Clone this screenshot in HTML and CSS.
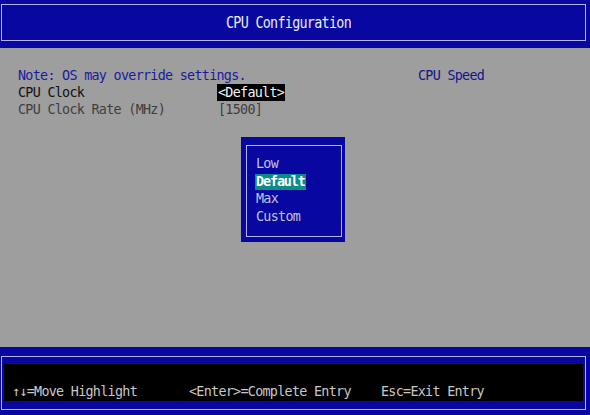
FILE: index.html
```html
<!DOCTYPE html>
<html lang="en">
<head>
    <meta charset="UTF-8">
    <meta name="viewport" content="width=device-width, initial-scale=1.0">
    <title>CPU Configuration</title>
    <link rel="stylesheet" href="styles.css">
</head>
<body>
    <div class="screen">
        <header class="title-bar">
            <div class="frame title-frame">
                <span class="title">CPU Configuration</span>
            </div>
        </header>

        <main class="setup">
            <div class="settings">
                <div class="note">Note: OS may override settings.</div>
                <div class="row">
                    <span class="label">CPU Clock</span>
                    <span class="value selected">&lt;Default&gt;</span>
                </div>
                <div class="row dim">
                    <span class="label">CPU Clock Rate (MHz)</span>
                    <span class="value">[1500]</span>
                </div>
            </div>
            <div class="help">CPU Speed</div>

            <!-- option list popup -->
            <div class="popup">
                <ul class="frame options">
                    <li>Low</li>
                    <li><span class="current">Default</span></li>
                    <li>Max</li>
                    <li>Custom</li>
                </ul>
            </div>
        </main>

        <footer class="key-bar">
            <div class="frame key-frame">
                <div class="keys">
                    <span>&uarr;&darr;=Move Highlight</span>
                    <span>&lt;Enter&gt;=Complete Entry</span>
                    <span>Esc=Exit Entry</span>
                </div>
            </div>
        </footer>
    </div>
</body>
</html>
```

FILE: styles.css
```css
body {
    margin: 0;
    font-family: 'DejaVu Sans Mono', 'Liberation Mono', monospace;
    font-size: 13.4px;
    line-height: 17px;
    letter-spacing: -0.71px;
    background-color: #9e9e9e;
    color: #111;
}

.screen {
    display: flex;
    flex-direction: column;
    width: 590px;
    height: 415px;
    overflow: hidden;
}

.frame {
    border: 1px solid #b4b4ee;
}

/* top title */
.title-bar {
    background: #0808a0;
    height: 48px;
    box-sizing: border-box;
    padding: 4px 4px 7px 1px;
}

.title-frame {
    height: 100%;
    box-sizing: border-box;
    display: flex;
    align-items: center;
    justify-content: center;
    padding-right: 10px;
}

.title {
    display: inline-block;
    color: #ececf4;
    transform: scaleY(1.2);
}

/* middle area */
.setup {
    flex: 1;
    position: relative;
    display: flex;
    padding: 19px 0 0 18px;
}

.settings {
    width: 400px;
}

.note {
    color: #1a1aa0;
}

.row {
    display: flex;
}

.label {
    width: 200px;
}

.value {
    padding: 0 1px;
    margin-left: -1px;
}

.selected {
    background: #000;
    color: #f4f4f4;
}

.dim {
    color: #3e3e3e;
}

.help {
    color: #14148c;
}

.popup {
    position: absolute;
    left: 241px;
    top: 89px;
    width: 104px;
    height: 105px;
    box-sizing: border-box;
    padding: 8px 3px 5px 5px;
    background: #0808a0;
}

.options {
    list-style: none;
    margin: 0;
    height: 100%;
    box-sizing: border-box;
    padding: 9px 0 0 9px;
    color: #c2c2dc;
    line-height: 17.7px;
}

.current {
    display: inline-block;
    margin-left: -1px;
    padding: 0 1px;
    line-height: 16px;
    background: #0a8c8c;
    color: #fff;
    font-weight: bold;
    letter-spacing: -1.1px;
}

/* bottom key help */
.key-bar {
    background: #0808a0;
    height: 68px;
    box-sizing: border-box;
    padding: 9px 4px 5px 1px;
}

.key-frame {
    height: 100%;
    box-sizing: border-box;
    padding: 7px 2px 8px 2px;
}

.keys {
    height: 100%;
    box-sizing: border-box;
    background: #000;
    color: #c8c8c8;
    display: grid;
    grid-template-columns: 177px 192px auto;
    align-items: end;
    padding: 0 0 1px 8px;
}
```
